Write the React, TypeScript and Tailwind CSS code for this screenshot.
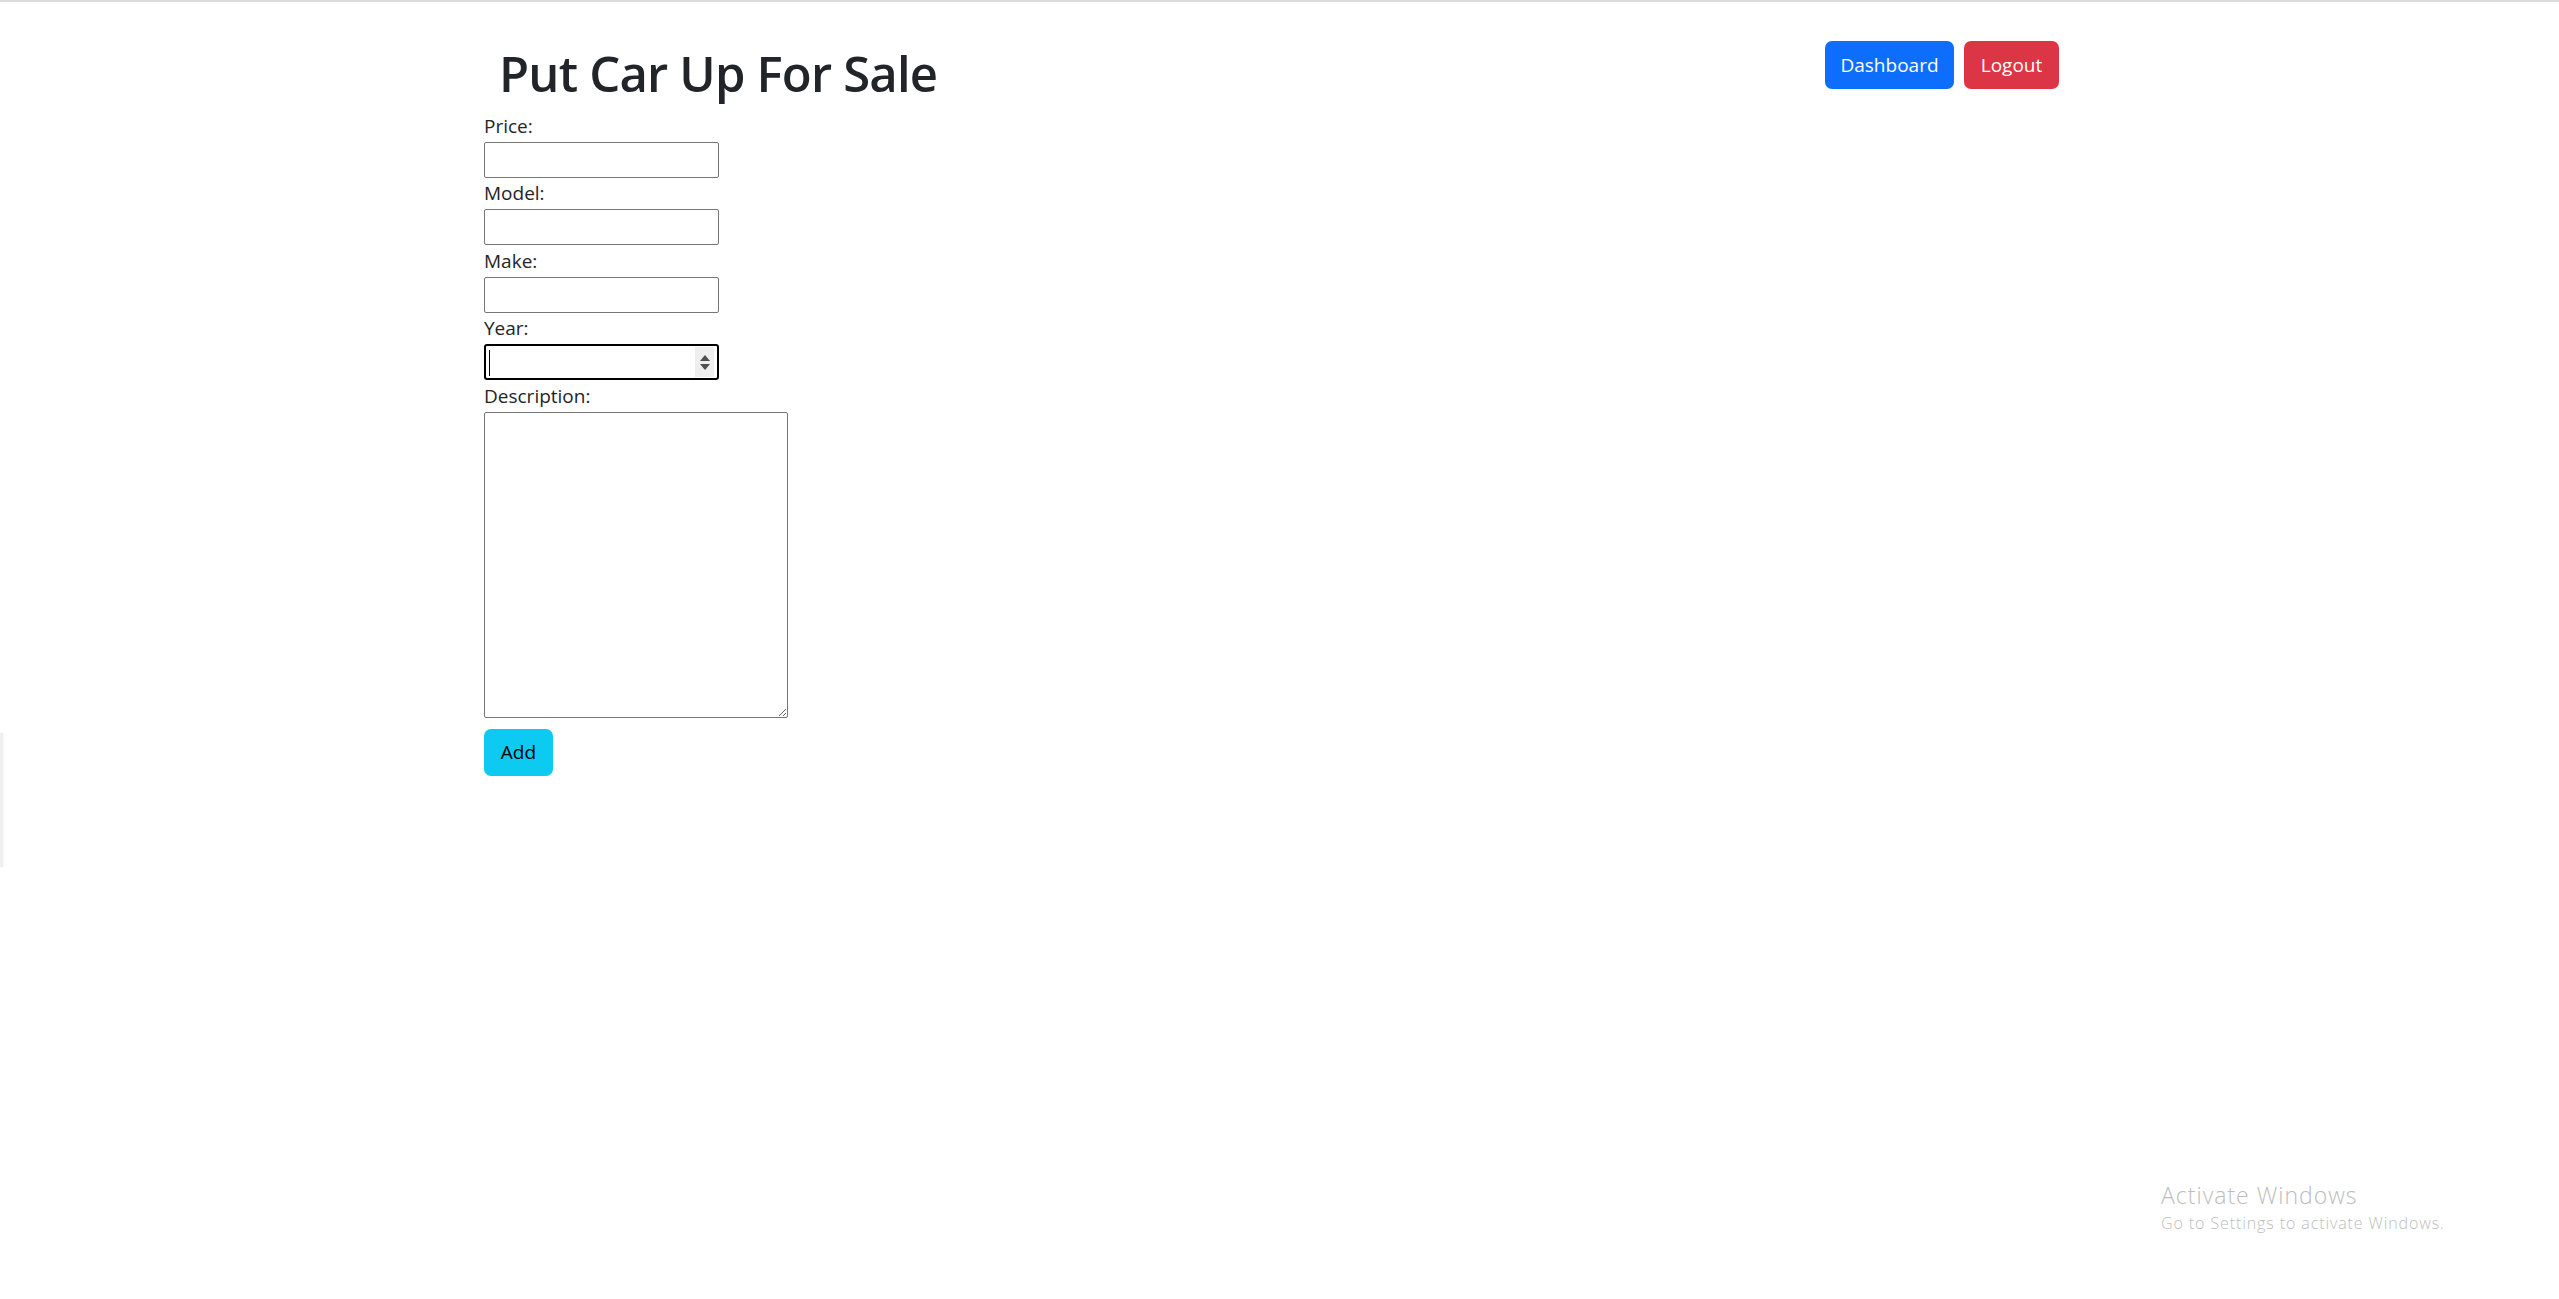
import React from "react";

export default function App() {
  const font = { fontFamily: '"Open Sans", "Noto Sans", "Liberation Sans", sans-serif' };
  return (
    <div
      className="relative min-h-[1299px] w-full bg-white border-t-2 border-[#dcdcdc] text-[#212529] overflow-hidden"
      style={font}
    >
      {/* faint left edge strip */}
      <div className="absolute left-0 top-[731px] h-[134px] w-[3px] bg-[#f0f0f0] shadow-[0_0_4px_rgba(0,0,0,0.06)]" />

      <div className="pl-[484px] pr-[500px]">
        <div className="flex items-start justify-between">
          <h1 className="mt-[41px] pl-[15px] text-[49px] leading-[60px] font-semibold tracking-[-0.8px]">
            Put Car Up For Sale
          </h1>
          <div className="mt-[39px] flex gap-[10px]">
            <button className="h-[48px] w-[129px] rounded-[7px] bg-[#0d6efd] text-white text-[19px]">
              Dashboard
            </button>
            <button className="h-[48px] w-[95px] rounded-[7px] bg-[#dc3545] text-white text-[19px]">
              Logout
            </button>
          </div>
        </div>

        <form className="mt-[8px] flex flex-col items-start text-[19px]">
          <label className="block leading-[31px]">Price:</label>
          <input className="block h-[36px] w-[235px] rounded-[2px] border border-[#767676] px-1 outline-none" />
          <label className="block leading-[31px]">Model:</label>
          <input className="block h-[36px] w-[235px] rounded-[2px] border border-[#767676] px-1 outline-none" />
          <label className="block leading-[32px]">Make:</label>
          <input className="block h-[36px] w-[235px] rounded-[2px] border border-[#767676] px-1 outline-none" />
          <label className="block leading-[31px]">Year:</label>
          <div className="relative h-[36px] w-[235px] rounded-[3px] border-2 border-black">
            <input className="h-full w-full bg-transparent pl-[4px] outline-none" />
            <span className="absolute left-[3px] top-[4px] h-[26px] w-[1px] bg-black" />
            <div className="absolute right-[3px] top-[1px] flex h-[30px] w-[19px] flex-col items-center justify-center gap-[3px] bg-[#efefef]">
              <svg width="10" height="6" viewBox="0 0 10 6">
                <path d="M0 6 L5 0 L10 6 Z" fill="#505050" />
              </svg>
              <svg width="10" height="6" viewBox="0 0 10 6">
                <path d="M0 0 L10 0 L5 6 Z" fill="#505050" />
              </svg>
            </div>
          </div>
          <label className="block leading-[32px]">Description:</label>
          <textarea className="block h-[306px] w-[304px] rounded-[2px] border border-[#767676] outline-none" />
          <button
            type="button"
            className="mt-[11px] h-[47px] w-[69px] rounded-[7px] bg-[#0dcaf0] text-black text-[19px]"
          >
            Add
          </button>
        </form>
      </div>

      {/* Windows activation watermark */}
      <div className="absolute left-[2161px] top-[1178px] text-[#bdbdbd] font-light">
        <div className="text-[23px] leading-[30px] tracking-[1px]">Activate Windows</div>
        <div className="mt-[2px] text-[16px] leading-[22px] tracking-[0.9px]">Go to Settings to activate Windows.</div>
      </div>
    </div>
  );
}
